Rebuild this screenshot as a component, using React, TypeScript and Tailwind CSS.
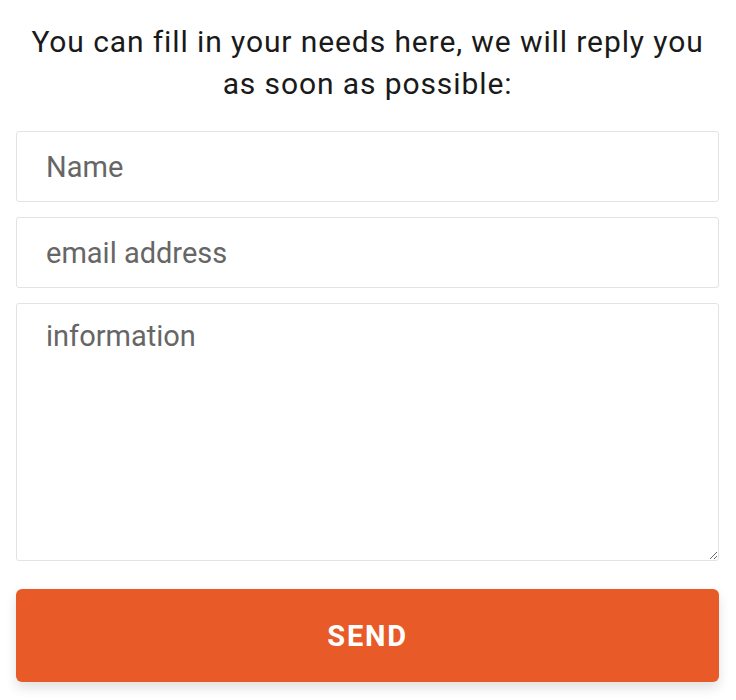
export default function App() {
  return (
    <div className="min-h-[700px] bg-white pl-4 pr-[17px] pt-[21px] font-['Roboto',sans-serif]">
      <p className="px-2 text-center text-[30px] leading-[42px] tracking-[0.03em] text-[#1a1a1a]">
        You can fill in your needs here, we will reply you as soon as possible:
      </p>
      <form className="mt-[26px] flex flex-col" onSubmit={(e) => e.preventDefault()}>
        <input
          type="text"
          placeholder="Name"
          className="h-[71px] rounded-[3px] border border-[#e3e3e3] px-[29px] text-[29px] text-[#333] outline-none placeholder:text-[#666]"
        />
        <input
          type="email"
          placeholder="email address"
          className="mt-[15px] h-[71px] rounded-[3px] border border-[#e3e3e3] px-[29px] text-[29px] text-[#333] outline-none placeholder:text-[#666]"
        />
        <textarea
          placeholder="information"
          className="mt-[15px] h-[258px] rounded-[3px] border border-[#e3e3e3] px-[29px] pt-[12px] text-[29px] leading-[40px] text-[#333] outline-none placeholder:text-[#666]"
        />
        <button
          type="submit"
          className="mt-[28px] h-[93px] rounded-[6px] bg-[#e85a27] pt-[2px] text-[29px] font-bold tracking-[0.06em] text-white shadow-[0_6px_12px_rgba(0,0,0,0.12)]"
        >
          SEND
        </button>
      </form>
    </div>
  );
}
